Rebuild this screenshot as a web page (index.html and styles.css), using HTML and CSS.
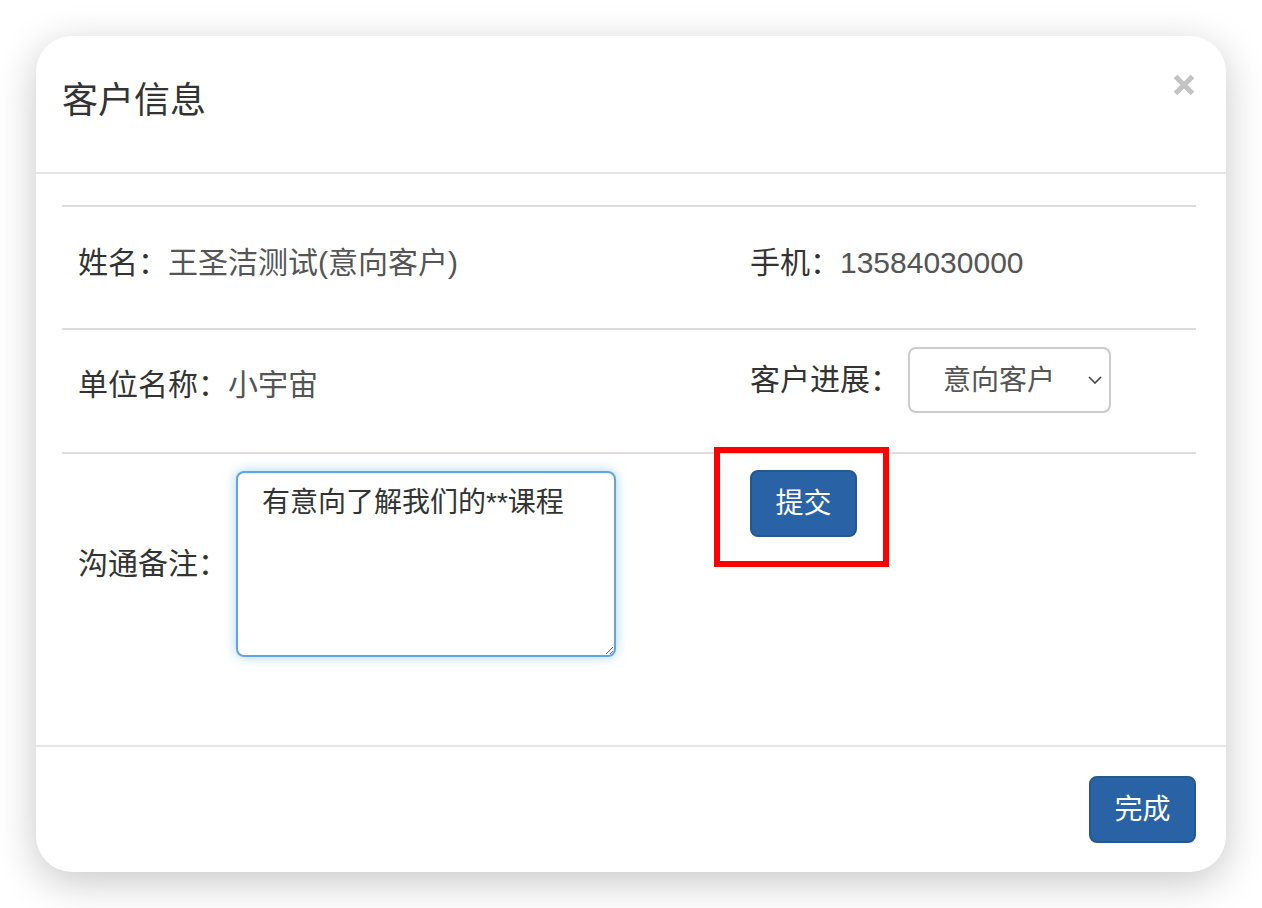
FILE: index.html
```html
<!DOCTYPE html>
<html lang="zh-CN">
<head>
<meta charset="utf-8">
<title>客户信息</title>
<link rel="stylesheet" href="styles.css">
</head>
<body>
<div class="modal">
  <div class="modal-header">
    <h4 class="modal-title">客户信息</h4>
    <button class="close" aria-label="关闭">
      <svg width="22" height="22" viewBox="0 0 22 22"><path d="M2.5 2.5 L19.5 19.5 M19.5 2.5 L2.5 19.5" stroke="#c3c3c3" stroke-width="5" fill="none"/></svg>
    </button>
  </div>
  <div class="modal-body">
    <div class="row row-1">
      <div class="cell"><span class="label">姓名：</span><span class="value">王圣洁测试(意向客户)</span></div>
      <div class="cell"><span class="label">手机：</span><span class="value">13584030000</span></div>
    </div>
    <div class="row row-2">
      <div class="cell cell-text"><span class="label">单位名称：</span><span class="value">小宇宙</span></div>
      <div class="cell cell-ctrl">
        <span class="label">客户进展：</span>
        <div class="select-wrap">
          <select class="select"><option>意向客户</option></select>
          <svg class="chevron" width="14" height="8" viewBox="0 0 14 8"><path d="M1 1 L7 7 L13 1" stroke="#444" stroke-width="1.6" fill="none"/></svg>
        </div>
      </div>
    </div>
    <div class="row row-3">
      <div class="cell cell-note">
        <span class="label">沟通备注：</span>
        <textarea class="note">有意向了解我们的**课程</textarea>
      </div>
      <div class="cell cell-submit">
        <div class="submit-wrap">
          <button class="btn">提交</button>
          <div class="highlight"></div>
        </div>
      </div>
    </div>
  </div>
  <div class="modal-footer">
    <button class="btn">完成</button>
  </div>
</div>
</body>
</html>
```

FILE: styles.css
```css
* { box-sizing: border-box; }

html, body {
  margin: 0;
  padding: 0;
  background: #ffffff;
}

body {
  padding: 36px;
  font-family: "Liberation Sans", "Noto Sans CJK SC", sans-serif;
  color: #333333;
}

.modal {
  width: 1190px;
  height: 836px;
  background: #ffffff;
  border-radius: 36px;
  box-shadow: 0 10px 40px rgba(0, 0, 0, 0.22);
  display: flex;
  flex-direction: column;
}

.modal-header {
  height: 138px;
  border-bottom: 2px solid #e5e5e5;
  padding: 43px 31px 0 26px;
  display: flex;
  justify-content: space-between;
  align-items: flex-start;
}

.modal-title {
  margin: 0;
  font-size: 36px;
  line-height: 44px;
  font-weight: normal;
  color: #333333;
}

.close {
  margin-top: -5px;
  padding: 0;
  border: 0;
  background: transparent;
  width: 22px;
  height: 22px;
  display: block;
}

.close svg { display: block; }

.modal-body {
  flex: 1;
  padding: 31px 30px 0 26px;
  display: flex;
  flex-direction: column;
}

.row {
  display: grid;
  grid-template-columns: 672px 1fr;
  border-top: 2px solid #dddddd;
}

.cell {
  padding: 0 16px;
  font-size: 30px;
  line-height: 40px;
  white-space: nowrap;
}

.label { color: #333333; }
.value { color: #555555; }

.row-1 { height: 123px; }
.row-1 .cell { padding-top: 36px; }

.row-2 { height: 124px; }
.row-2 .cell-text { padding-top: 22px; line-height: 66px; }
.row-2 .cell-ctrl {
  padding-top: 17px;
  display: flex;
  align-items: center;
  align-self: start;
}

.select-wrap {
  position: relative;
  margin-left: 8px;
}

.select {
  -webkit-appearance: none;
  appearance: none;
  width: 203px;
  height: 66px;
  border: 2px solid #cccccc;
  border-radius: 8px;
  background: #ffffff;
  padding: 0 0 0 33px;
  font-family: "Liberation Sans", "Noto Sans CJK SC", sans-serif;
  font-size: 28px;
  color: #555555;
  outline: none;
}

.chevron {
  position: absolute;
  right: 9px;
  top: 29px;
  pointer-events: none;
}

.row-3 { flex: 1; }

.cell-note {
  padding-top: 17px;
  display: flex;
  align-items: center;
  align-self: start;
}

.note {
  margin-left: 8px;
  width: 380px;
  height: 186px;
  border: 2px solid #5fa6e6;
  border-radius: 8px;
  padding: 10px 24px;
  font-family: "Liberation Sans", "Noto Sans CJK SC", sans-serif;
  font-size: 28px;
  line-height: 40px;
  color: #333333;
  outline: none;
  box-shadow: 0 0 12px rgba(102, 175, 233, 0.55), inset 0 1px 1px rgba(0, 0, 0, 0.075);
  resize: both;
}

.cell-submit { padding-top: 16px; }

.submit-wrap {
  position: relative;
  display: inline-block;
}

.btn {
  display: block;
  width: 107px;
  height: 67px;
  padding: 0;
  background: #2963a5;
  border: 2px solid #245890;
  border-radius: 8px;
  color: #ffffff;
  font-family: "Liberation Sans", "Noto Sans CJK SC", sans-serif;
  font-size: 28px;
  line-height: 1;
}

.highlight {
  position: absolute;
  left: -36px;
  top: -23px;
  width: 175px;
  height: 120px;
  border: 6px solid #ff0000;
  pointer-events: none;
}

.modal-footer {
  height: 127px;
  border-top: 2px solid #e5e5e5;
  padding: 29px 30px 0 0;
  display: flex;
  justify-content: flex-end;
  align-items: flex-start;
}
```
